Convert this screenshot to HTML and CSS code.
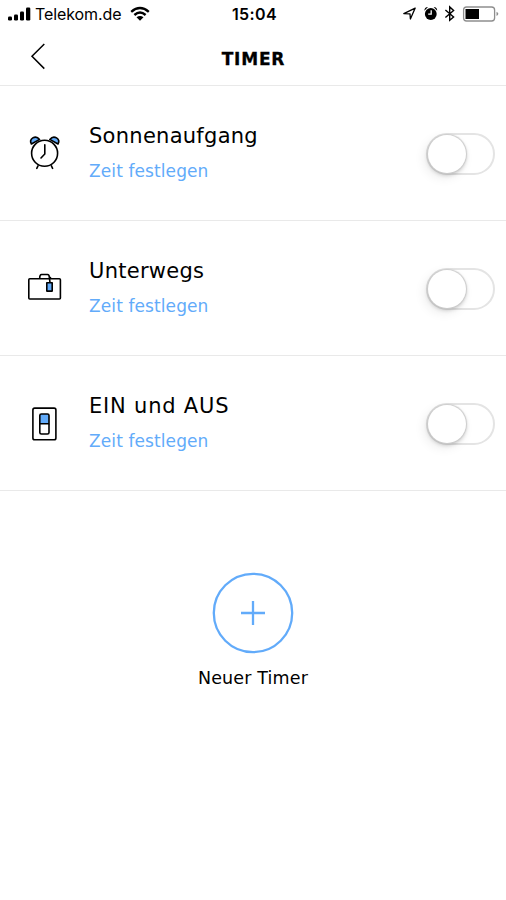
FILE: index.html
```html
<!DOCTYPE html>
<html lang="de">
<head>
<meta charset="utf-8">
<title>Timer</title>
<link rel="stylesheet" href="styles.css">
</head>
<body>
<div class="status">
  <div class="status-left">
    <svg width="24" height="16" viewBox="0 0 24 16"><rect x="0" y="10.5" width="4" height="4" rx="1.2"/><rect x="6" y="8.5" width="4" height="6" rx="1.2"/><rect x="12" y="5.5" width="4" height="9" rx="1.2"/><rect x="18" y="1.5" width="4.3" height="13" rx="1.2"/></svg>
    <span class="carrier">Telekom.de</span>
    <svg class="wifi" width="20" height="16" viewBox="0 0 20 16"><g fill="none" stroke="#000" stroke-width="2.4"><path d="M1.2 5.8Q10 -1.8 18.8 5.8"/><path d="M4.4 9Q10 4 15.6 9"/></g><path d="M6.5 11.3Q10 8.6 13.5 11.3L10 14.8Z"/></svg>
  </div>
  <span class="clock">15:04</span>
  <div class="status-right">
    <svg width="100" height="20" viewBox="0 0 100 20">
      <path d="M0.8 13.6L12.2 8.1L7.4 19L7 13.9Z" fill="none" stroke="#000" stroke-width="1.3" stroke-linejoin="round"/>
      <circle cx="27.8" cy="14" r="5.9"/><path d="M21.4 10.8Q21.3 7.3 25 7.1ZM34.2 10.8Q34.3 7.3 30.6 7.1Z"/><path d="M28.2 10.3V14.2H25.2" fill="none" stroke="#fff" stroke-width="1.3"/>
      <path d="M42.4 10L50.6 17L46.7 20.3V6.9L50.6 10.5L42.4 17.5" fill="none" stroke="#000" stroke-width="1.4"/>
      <rect x="60.6" y="7" width="31" height="14" rx="3" fill="none" stroke="#8e8e8e" stroke-width="1.3"/><rect x="62.5" y="9" width="13.5" height="10"/><path d="M93.5 11.7Q97.2 13.7 93.5 16Z" fill="#8e8e8e"/>
    </svg>
  </div>
</div>
<header class="nav">
  <svg width="16" height="28" viewBox="0 0 16 28"><path d="M14.3 2L2 14.3L14.3 26.6" fill="none" stroke="#000" stroke-width="1.5"/></svg>
  <h1>TIMER</h1>
  <span></span>
</header>
<main>
  <section class="row">
    <svg class="icon" width="36" height="40" viewBox="0 0 36 40" fill="none" stroke="#000" stroke-width="1.6" stroke-linecap="round" stroke-linejoin="round"><path class="blue" d="M4.4 12C1.6 7.2 8.3 2.2 12.6 7.4ZM31 12C33.8 7.2 27.1 2.2 22.8 7.4Z"/><circle cx="17.6" cy="21.3" r="13" fill="#fff"/><path d="M17.8 12.8V22L14 26M11 33.8L9.8 36.3M24.4 33.8L25.6 36.3"/></svg>
    <div class="copy"><h2>Sonnenaufgang</h2><p>Zeit festlegen</p></div>
    <span class="switch"></span>
  </section>
  <section class="row">
    <svg class="icon" width="36" height="40" viewBox="0 0 36 40" fill="none" stroke="#000" stroke-width="1.6" stroke-linecap="round" stroke-linejoin="round"><rect x="1.8" y="11.7" width="31.6" height="20.3" rx="1"/><path d="M12.7 11.3Q12.7 7.5 14.5 7.5H20.5Q22.3 7.5 22.3 10.2L23 15.5M22.3 10.5H23.5"/><rect class="blue" x="19.8" y="15.8" width="5.4" height="8.3"/></svg>
    <div class="copy"><h2>Unterwegs</h2><p>Zeit festlegen</p></div>
    <span class="switch"></span>
  </section>
  <section class="row">
    <svg class="icon" width="36" height="40" viewBox="0 0 36 40" fill="none" stroke="#000" stroke-width="1.6" stroke-linejoin="round"><rect x="5.9" y="6.1" width="23" height="31.6" rx="1.8"/><path class="blue" d="M12.8 21.8V13.6Q12.8 12 14.4 12H20.5Q22 12 22 13.6V21.8Z"/><path d="M12.8 21.8V30.5Q12.8 32 14.4 32H20.5Q22 32 22 30.5V21.8"/></svg>
    <div class="copy"><h2 class="wide">EIN und AUS</h2><p>Zeit festlegen</p></div>
    <span class="switch"></span>
  </section>
  <div class="add">
    <svg width="82" height="82" viewBox="0 0 82 82" fill="none" stroke="#62abfa" stroke-width="2.3"><circle cx="41" cy="41" r="39.2"/><path d="M29 41H53M41 29V53"/></svg>
    <span>Neuer Timer</span>
  </div>
</main>
</body>
</html>
```
FILE: styles.css
```css
* { box-sizing: border-box; }
body { margin: 0; width: 506px; height: 900px; background: #fff; color: #000; font-family: "DejaVu Sans", sans-serif; overflow: hidden; }
h1, h2, p { margin: 0; font-weight: 400; }
svg { display: block; flex: none; }
.status { display: grid; grid-template-columns: 1fr auto 1fr; height: 28px; font-family: Inter, "Liberation Sans", sans-serif; }
.status-left { display: flex; align-items: center; padding-left: 8px; height: 28px; }
.carrier { font-size: 16px; line-height: 28px; margin-left: 3px; width: 91px; white-space: nowrap; letter-spacing: -0.1px; }
.wifi { margin-left: 4px; }
.clock { font-size: 16px; font-weight: 600; line-height: 28px; letter-spacing: 0.4px; padding-left: 3px; }
.status-right { display: flex; justify-content: flex-end; padding-right: 3px; }
.status-right svg { overflow: visible; }
.nav { display: grid; grid-template-columns: 1fr auto 1fr; align-items: center; height: 58px; border-bottom: 1px solid #e9e9e9; padding: 0 30px 2px; }
.nav h1 { font-size: 17px; font-weight: 700; line-height: 24px; padding-top: 6px; letter-spacing: 0.8px; padding-left: 1px; -webkit-text-stroke: 0.3px #000; }
.row { display: flex; height: 135px; padding: 36px 11px 0 27px; border-bottom: 1px solid #e9e9e9; }
.icon { margin-top: 10px; }
.blue { fill: #62abfa; }
.copy { flex: 1; margin-left: 26px; }
.copy h2 { font-size: 21px; line-height: 28px; letter-spacing: 0.27px; }
.copy h2.wide { letter-spacing: 0.8px; }
.copy p { font-size: 17px; line-height: 24px; margin-top: 9px; color: #62abfa; letter-spacing: 0.1px; }
.switch { width: 69px; height: 42px; margin-top: 11px; border: 2px solid #e4e4e4; border-radius: 21px; }
.switch::before { content: ""; display: block; width: 38px; height: 38px; margin: -0.5px 0 0 -0.5px; border-radius: 50%; background: #fff; box-shadow: 0 0 1px 1px #ccc, 0 2px 4px rgba(0,0,0,.2), -3px 4px 12px rgba(0,0,0,.09); }
.add { display: flex; flex-direction: column; align-items: center; padding-top: 80.5px; }
.add span { margin-top: 11.5px; font-size: 17.5px; line-height: 26px; letter-spacing: 0.15px; }
```
